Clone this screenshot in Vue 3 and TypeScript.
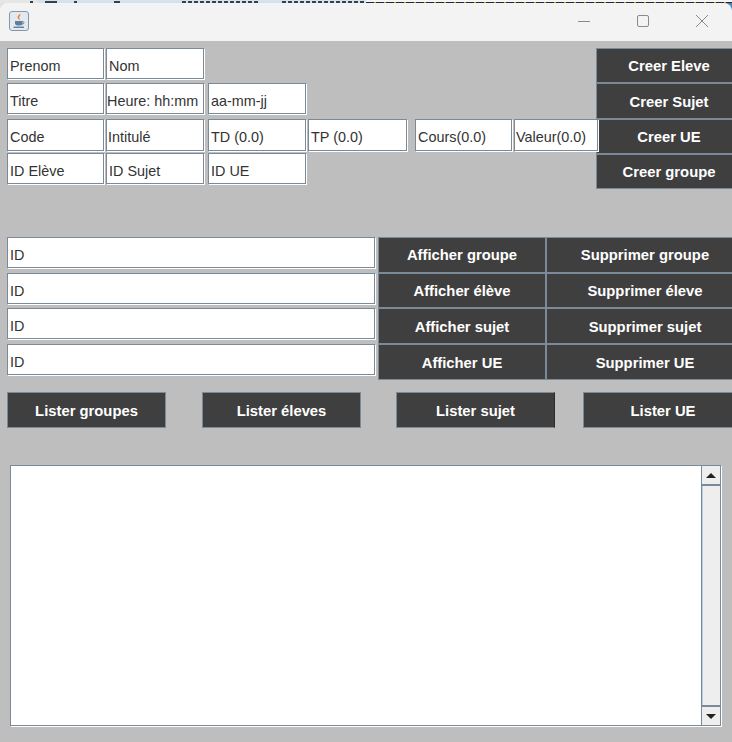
<script setup lang="ts">
const identityRows = [
  ['Prenom', 'Nom'],
  ['Titre', 'Heure: hh:mm', 'aa-mm-jj'],
  ['Code', 'Intitulé', 'TD (0.0)', 'TP (0.0)', 'Cours(0.0)', 'Valeur(0.0)'],
  ['ID Elève', 'ID Sujet', 'ID UE'],
]
const createButtons = ['Creer Eleve', 'Creer Sujet', 'Creer UE', 'Creer groupe']
const lookups = [
  { show: 'Afficher groupe', remove: 'Supprimer groupe' },
  { show: 'Afficher élève', remove: 'Supprimer éleve' },
  { show: 'Afficher sujet', remove: 'Supprimer sujet' },
  { show: 'Afficher UE', remove: 'Supprimer UE' },
]
const listButtons = ['Lister groupes', 'Lister éleves', 'Lister sujet', 'Lister UE']
</script>

<template>
  <div class="screen">
    <div class="window-top">
      <div class="desktop-strip">
        <span class="strip-left"></span>
        <span class="strip-right"></span>
      </div>
      <header class="titlebar">
        <span class="app-icon">
          <svg viewBox="0 0 20 20" width="20" height="20">
            <rect x="0.5" y="0.5" width="19" height="19" rx="2.5" fill="#e3e9ef" stroke="#7f98ae" />
            <path d="M11 2.500c1.600 1.800-1.600 3-.7 4.800.3.700.8 1.100 1 1.700-2-.7-3.400-2-2.500-3.800.6-1.100 1.900-1.500 2.200-2.700z" fill="#ea7f2b" />
            <path d="M6 10h7.500v2.200c0 1.500-1.300 2.300-3.700 2.300S6 13.700 6 12.200z" fill="#5d7f9f" />
            <path d="M13.500 10.500c2 0 2 2.500-.5 2.700" fill="none" stroke="#5d7f9f" />
            <path d="M4.500 16.200h10.500" stroke="#4b6a88" stroke-width="1.200" />
          </svg>
        </span>
        <div class="window-controls">
          <svg width="12" height="12" viewBox="0 0 12 12"><path d="M0 6.500h12" stroke="#8a8a8a" /></svg>
          <svg width="12" height="12" viewBox="0 0 12 12"><rect x="0.500" y="0.500" width="11" height="11" rx="1.500" fill="none" stroke="#8a8a8a" /></svg>
          <svg width="12" height="12" viewBox="0 0 12 12"><path d="M0 0l12 12M12 0L0 12" stroke="#8a8a8a" /></svg>
        </div>
      </header>
    </div>

    <main class="content">
      <section class="create-section">
        <div class="field-rows">
          <div v-for="(row, i) in identityRows" :key="i" class="field-row">
            <input v-for="label in row" :key="label" class="field" :value="label" readonly />
          </div>
        </div>
        <div class="create-buttons">
          <button v-for="label in createButtons" :key="label" class="action">{{ label }}</button>
        </div>
      </section>

      <section class="lookup-section">
        <div class="id-fields">
          <input v-for="item in lookups" :key="item.show" class="field" value="ID" readonly />
        </div>
        <div class="lookup-buttons">
          <template v-for="item in lookups" :key="item.show">
            <button class="action">{{ item.show }}</button>
            <button class="action">{{ item.remove }}</button>
          </template>
        </div>
      </section>

      <section class="list-section">
        <button v-for="label in listButtons" :key="label" class="action">{{ label }}</button>
      </section>

      <section class="output">
        <div class="output-text"></div>
        <div class="scrollbar">
          <span class="arrow-btn"><i class="arrow up"></i></span>
          <span class="track"></span>
          <span class="arrow-btn end"><i class="arrow down"></i></span>
        </div>
      </section>
    </main>
  </div>
</template>

<style>
html, body {
  margin: 0;
  background: #bebebe;
}
</style>

<style scoped>
.screen {
  width: 732px;
  height: 742px;
  overflow: hidden;
  background: #bebebe;
  font-family: "Liberation Sans", Arial, sans-serif;
}

.window-top {
  background: linear-gradient(90deg, #dfe3e6 50%, #4a86b8 50%);
}

.desktop-strip {
  display: flex;
  height: 3px;
}

.strip-left {
  width: 366px;
  background:
    repeating-linear-gradient(90deg, #3a4048 0 4px, transparent 4px 6px) 182px 1px / 76px 2px no-repeat,
    repeating-linear-gradient(90deg, #3a4048 0 4px, transparent 4px 6px) 282px 1px / 84px 2px no-repeat,
    linear-gradient(#3a4048, #3a4048) 30px 1px / 3px 2px no-repeat,
    linear-gradient(#3a4048, #3a4048) 45px 1px / 12px 2px no-repeat,
    linear-gradient(#3a4048, #3a4048) 74px 1px / 3px 2px no-repeat,
    linear-gradient(#3a4048, #3a4048) 114px 1px / 6px 2px no-repeat,
    linear-gradient(90deg, #e6e6e6 0 38px, #d3e2ef 38px);
}

.strip-right {
  flex: 1;
  background:
    linear-gradient(#f4f4f4 0 2px, transparent 2px),
    repeating-linear-gradient(90deg, #1f2a36 0 8px, #e0963f 8px 10px);
}

.titlebar {
  height: 38px;
  background: #f3f3f3;
  border-radius: 8px 8px 0 0;
  display: flex;
  align-items: center;
  justify-content: space-between;
  padding: 0 24px 0 9px;
  box-sizing: border-box;
}

.app-icon {
  display: flex;
  margin-top: -3px;
}

.window-controls {
  display: flex;
  gap: 47px;
  margin-top: -3px;
}

.window-controls svg {
  display: block;
}

.content {
  padding-top: 7px;
}

.field {
  display: block;
  box-sizing: border-box;
  flex: none;
  width: 97px;
  height: 31px;
  margin: 0;
  padding: 4px 2px 0;
  border: 1px solid #7a8a99;
  border-radius: 0;
  box-shadow: 1px 1px 0 #fff;
  background: #fff;
  color: #333;
  font: 14.4px "Liberation Sans", Arial, sans-serif;
  outline: none;
}

.action {
  display: block;
  box-sizing: border-box;
  margin: 0;
  padding: 1px 0 0;
  border: 1px solid #7a8a99;
  border-radius: 0;
  background: #3f3f3f;
  color: #fff;
  font: bold 14.8px "Liberation Sans", Arial, sans-serif;
}

.create-section {
  display: grid;
  grid-template-columns: 589px 146px;
  height: 189px;
  padding-left: 7px;
}

.field-rows {
  position: relative;
  z-index: 1;
  display: flex;
  flex-direction: column;
}

.field-row {
  display: flex;
  gap: 2px;
  height: 35px;
}

.field-row:nth-child(3) {
  height: 34px;
  margin-top: 1px;
}

.field-row:nth-child(3) .field {
  height: 32px;
}

.field-row:nth-child(2) .field:nth-child(2) {
  padding-left: 0;
  padding-right: 0;
}

.field-row:nth-child(3) .field:nth-child(2) {
  padding-left: 1px;
}

.field-row .field:nth-child(2),
.field-row .field:nth-child(3) {
  width: 98px;
}

.field-row .field:nth-child(3) {
  margin-left: 2px;
}

.field-row .field:nth-child(4) {
  width: 99px;
}

.field-row .field:nth-child(5) {
  margin-left: 6px;
}

.field-row .field:nth-child(6) {
  width: 84px;
  padding-left: 1px;
}

.create-buttons {
  display: flex;
  flex-direction: column;
}

.create-buttons .action {
  height: 35px;
}

.create-buttons .action:nth-child(2) {
  height: 36px;
}

.lookup-section {
  display: flex;
  padding-left: 7px;
  gap: 3px;
  height: 143px;
}

.id-fields {
  flex: none;
  width: 368px;
  display: flex;
  flex-direction: column;
  gap: 5px;
}

.id-fields .field {
  width: 100%;
}

.id-fields .field:nth-child(3) {
  margin-top: -1px;
}

.lookup-buttons {
  flex: none;
  display: grid;
  grid-template-columns: 168px 198px;
  grid-template-rows: 35.5px 35.5px 36px 36px;
}

.list-section {
  margin-top: 12px;
  padding-left: 7px;
  display: flex;
  gap: 36px;
}

.list-section .action {
  flex: none;
  width: 159px;
  height: 36px;
}

.list-section .action:nth-child(3) {
  margin-left: -1px;
  border-right-color: #2c2c2c;
}

.list-section .action:nth-child(4) {
  margin-left: -8px;
  width: 160px;
}

.output {
  margin: 37px 0 0 10px;
  width: 711px;
  height: 261px;
  box-sizing: border-box;
  border: 1px solid #7a8a99;
  box-shadow: 1px 1px 0 #fff;
  background: #fff;
  display: flex;
  justify-content: flex-end;
}

.scrollbar {
  width: 18px;
  display: flex;
  flex-direction: column;
  border-left: 1px solid #7a8a99;
  background: #eee;
}

.arrow-btn {
  height: 18px;
  flex: none;
  display: flex;
  align-items: center;
  justify-content: center;
  background: #eee;
}

.track {
  flex: 1;
  background: #eee;
  border-top: 2px solid #7a8a99;
  border-bottom: 2px solid #7a8a99;
  box-shadow: inset 1px 0 0 #b8cfe8;
}

.arrow {
  width: 0;
  height: 0;
  border-left: 5px solid transparent;
  border-right: 5px solid transparent;
}

.arrow.up {
  border-bottom: 5px solid #222;
}

.arrow.down {
  border-top: 5px solid #222;
}
</style>
